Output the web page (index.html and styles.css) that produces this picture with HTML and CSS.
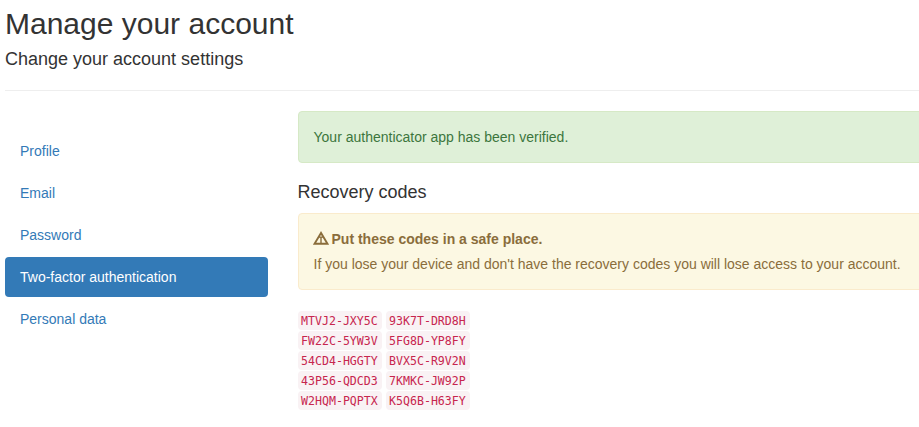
FILE: index.html
```html
<!DOCTYPE html>
<html lang="en">
<head>
<meta charset="utf-8">
<title>Manage your account</title>
<link rel="stylesheet" href="styles.css">
</head>
<body>
<main class="page">
  <h2 class="title">Manage your account</h2>
  <h4 class="subtitle">Change your account settings</h4>
  <hr class="divider">
  <div class="layout">
    <nav class="nav">
      <a class="nav-link">Profile</a>
      <a class="nav-link">Email</a>
      <a class="nav-link">Password</a>
      <a class="nav-link active">Two-factor authentication</a>
      <a class="nav-link">Personal data</a>
    </nav>
    <section class="content">
      <div class="alert success">Your authenticator app has been verified.</div>
      <h4 class="heading">Recovery codes</h4>
      <div class="alert warning">
        <p class="lead"><svg class="icon" viewBox="0 0 16 14" width="16" height="14"><path d="M8 1.9 1.5 12.8H14.5Z" fill="none" stroke="currentColor" stroke-width="1.9"/><path d="M6 5.6h4v1.2H8.7V12H7.3V6.8H6Z" fill="currentColor"/></svg><strong>Put these codes in a safe place.</strong></p>
        <p>If you lose your device and don't have the recovery codes you will lose access to your account.</p>
      </div>
      <div class="codes">
        <code>MTVJ2-JXY5C</code><code>93K7T-DRD8H</code>
        <code>FW22C-5YW3V</code><code>5FG8D-YP8FY</code>
        <code>54CD4-HGGTY</code><code>BVX5C-R9V2N</code>
        <code>43P56-QDCD3</code><code>7KMKC-JW92P</code>
        <code>W2HQM-PQPTX</code><code>K5Q6B-H63FY</code>
      </div>
    </section>
  </div>
</main>
</body>
</html>
```
FILE: styles.css
```css
* { box-sizing: border-box; }
body {
  margin: 0;
  background: #fff;
  color: #333;
  font: 14px/20px "Liberation Sans", Arial, sans-serif;
  overflow: hidden;
}
.page { width: 960px; padding: 7px 0 0 5px; }
h2, h4, p { margin: 0; font-weight: 400; }
.title { font-size: 30px; line-height: 33px; }
.subtitle { margin-top: 9px; font-size: 18px; line-height: 20px; }
.divider { height: 1px; margin: 21px 0 20px; border: 0; background: #eee; }
.layout { display: grid; grid-template-columns: 263px 1fr; column-gap: 29.5px; }
.nav { display: flex; flex-direction: column; gap: 2px; padding-top: 20px; }
.nav-link { padding: 10px 15px; border-radius: 4px; color: #337ab7; }
.nav-link.active { background: #337ab7; color: #fff; }
.alert { padding: 15px; border: 1px solid; border-radius: 4px; }
.success { color: #3c763d; background: #dff0d8; border-color: #d6e9c6; }
.warning { color: #8a6d3b; background: #fcf8e3; border-color: #faebcc; }
.heading { margin: 19px 0 11px; font-size: 18px; line-height: 20px; }
.lead { display: flex; align-items: center; gap: 3px; margin-bottom: 5px; }
.icon { flex: none; margin: -2px 0 0 -1px; }
.codes {
  display: grid;
  grid-template-columns: 84px 84px;
  gap: 1px 4px;
  margin-top: 21px;
  padding-left: 0.5px;
}
code {
  height: 19px;
  padding: 0 3px;
  border-radius: 4px;
  background: #f9f2f4;
  color: #c7254e;
  font: 11.6px/20px "DejaVu Sans Mono", monospace;
  white-space: nowrap;
}
```
